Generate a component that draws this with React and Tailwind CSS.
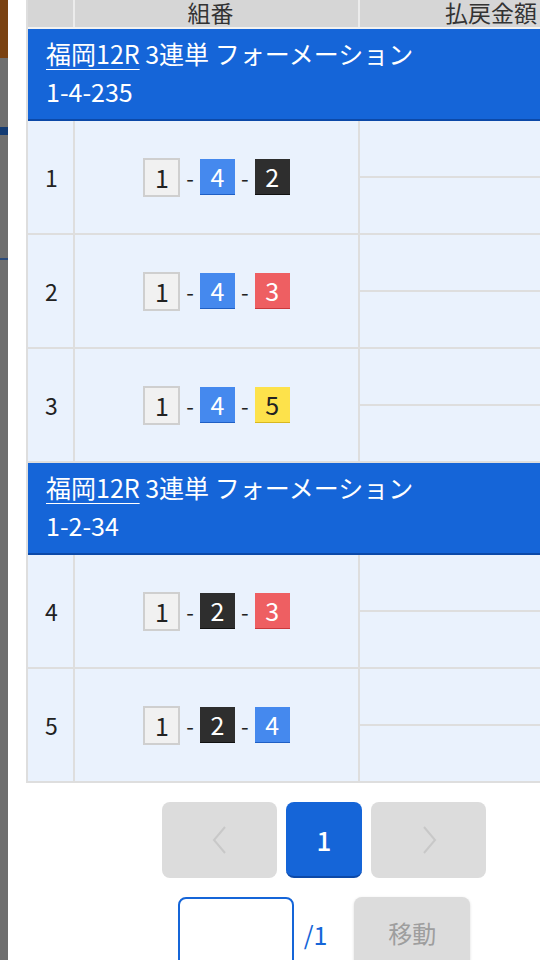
const FONT = { fontFamily: '"Noto Sans CJK JP", "Noto Sans", sans-serif' };

const BOX = {
  1: 'bg-[#f1f1f1] text-[#222] border-2 border-[#cfcfcf] w-[37px] h-[39px]',
  2: 'bg-[#2e2e2e] text-white border-b border-[#111] w-[35px] h-[36px]',
  3: 'bg-[#ee5f62] text-white border-b border-[#c9393c] w-[35px] h-[36px]',
  4: 'bg-[#4589ee] text-white border-b border-[#1f5fc4] w-[35px] h-[36px]',
  5: 'bg-[#fde24b] text-[#222] border-b border-[#d8b820] w-[35px] h-[36px]',
};

const groups = [
  {
    bet: '1-4-235',
    rows: [
      { no: 1, combo: [1, 4, 2] },
      { no: 2, combo: [1, 4, 3] },
      { no: 3, combo: [1, 4, 5] },
    ],
  },
  {
    bet: '1-2-34',
    rows: [
      { no: 4, combo: [1, 2, 3] },
      { no: 5, combo: [1, 2, 4] },
    ],
  },
];

function Boat({ n }) {
  return (
    <span className={`flex items-center justify-center text-[25px] leading-none ${BOX[n]}`}>{n}</span>
  );
}

function Row({ no, combo }) {
  return (
    <div className="flex h-[114px] bg-[#eaf2fd] border-b-2 border-[#dedede]">
      <div className="w-[47px] shrink-0 border-r-2 border-[#dedede] flex items-center pl-[17px] text-[23px] text-[#222]">
        {no}
      </div>
      <div className="w-[285px] shrink-0 border-r-2 border-[#dedede] flex items-center justify-center gap-[6px]">
        {combo.map((n, i) => (
          <div key={i} className="flex items-center gap-[6px]">
            {i > 0 && <span className="text-[22px] text-[#222] leading-none">-</span>}
            <Boat n={n} />
          </div>
        ))}
      </div>
      <div className="flex-1 flex flex-col">
        <div className="flex-1 border-b-2 border-[#dedede]" />
        <div className="flex-1" />
      </div>
    </div>
  );
}

function GroupHeader({ bet }) {
  return (
    <div className="bg-[#1565d8] border-b-2 border-[#0c49a8] text-white text-[25px] leading-[38px] pl-[18px] pt-[5px] pb-[9px]">
      <div>
        <span className="underline underline-offset-[5px] decoration-1">福岡12R</span> 3連単 フォーメーション
      </div>
      <div>{bet}</div>
    </div>
  );
}

export default function App() {
  return (
    <div className="w-[540px] h-[960px] overflow-hidden flex bg-white" style={FONT}>
      <div className="w-[8px] shrink-0 flex flex-col bg-[#6e6e6e]">
        <div className="h-[58px] bg-[#7a4212]" />
        <div className="h-[69px]" />
        <div className="h-[8px] bg-[#123a72]" />
        <div className="h-[123px]" />
        <div className="h-[2px] bg-[#2a4a7a]" />
      </div>
      <div className="flex-1 pl-[18px] overflow-hidden">
        <div className="w-[596px]">
          <div className="border-l-2 border-[#dedede]">
            <div className="flex h-[29px] bg-[#d6d6d6] border-b-2 border-[#f2f2f2] text-[23px] text-[#333] overflow-hidden">
              <div className="w-[47px] shrink-0 border-r-2 border-[#ececec]" />
              <div className="w-[285px] shrink-0 border-r-2 border-[#ececec] flex justify-center">
                <span className="-mt-[7px] leading-[38px] pr-[12px]">組番</span>
              </div>
              <div className="flex-1 flex justify-center">
                <span className="-mt-[7px] leading-[38px]">払戻金額</span>
              </div>
            </div>
            {groups.map((g) => (
              <div key={g.bet}>
                <GroupHeader bet={g.bet} />
                {g.rows.map((r) => (
                  <Row key={r.no} no={r.no} combo={r.combo} />
                ))}
              </div>
            ))}
          </div>

          <div className="flex justify-center gap-[9px] mt-[19px]">
            <button className="w-[115px] h-[76px] rounded-[8px] bg-[#dcdcdc] flex items-center justify-center">
              <svg width="18" height="30" viewBox="0 0 18 30" fill="none" stroke="#c8c8c8" strokeWidth="2">
                <path d="M14 2 L3 15 L14 28" />
              </svg>
            </button>
            <button className="w-[76px] h-[76px] rounded-[8px] bg-[#1565d8] border-b-2 border-[#0c49a8] text-white text-[26px] font-medium">
              1
            </button>
            <button className="w-[115px] h-[76px] rounded-[8px] bg-[#dcdcdc] flex items-center justify-center">
              <svg width="18" height="30" viewBox="0 0 18 30" fill="none" stroke="#c8c8c8" strokeWidth="2">
                <path d="M4 2 L15 15 L4 28" />
              </svg>
            </button>
          </div>

          <div className="flex justify-center items-start mt-[19px]">
            <input className="w-[116px] h-[76px] rounded-[8px] border-2 border-[#1565d8] bg-white outline-none" />
            <span className="ml-[10px] mt-[25px] text-[25px] leading-none text-[#1565d8]">/1</span>
            <button className="ml-[27px] w-[116px] h-[76px] rounded-[8px] bg-[#dcdcdc] text-[#9e9e9e] text-[24px] shadow-[0_1px_3px_rgba(0,0,0,0.15)] flex items-start justify-center pt-[24px] leading-none">
              移動
            </button>
          </div>
        </div>
      </div>
    </div>
  );
}
